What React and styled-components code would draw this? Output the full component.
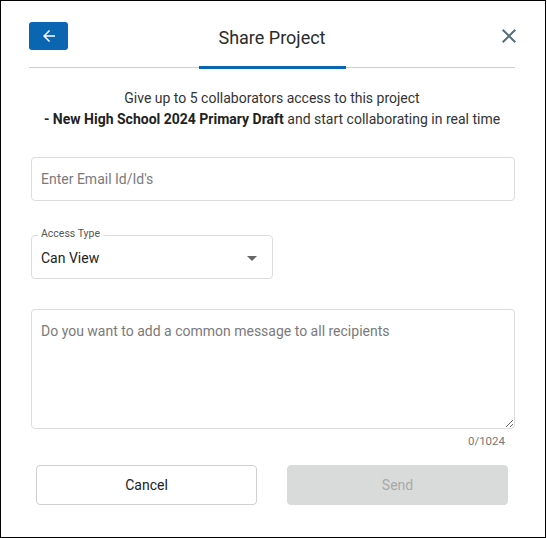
import React from 'react';
import styled, { createGlobalStyle } from 'styled-components';

const GlobalStyle = createGlobalStyle`
  body {
    margin: 0;
    background: #fff;
    font-family: Roboto, "Liberation Sans", sans-serif;
  }
`;

const Dialog = styled.div`
  box-sizing: border-box;
  width: 546px;
  height: 538px;
  border: 1px solid #000;
  padding: 21px 30px 0 28px;
  display: flex;
  flex-direction: column;
`;

const Header = styled.div`
  display: grid;
  grid-template-columns: 39px 1fr 39px;
  align-items: center;
  height: 28px;
`;

const BackButton = styled.button`
  width: 39px;
  height: 28px;
  border: none;
  border-radius: 3px;
  background: #0b66b1;
  display: flex;
  align-items: center;
  justify-content: center;
  padding: 0;
  cursor: pointer;
`;

const Title = styled.h2`
  margin: 0;
  padding-top: 2px;
  text-align: center;
  font-size: 18px;
  font-weight: 400;
  color: #2b2b2b;
`;

const CloseButton = styled.button`
  justify-self: end;
  border: none;
  background: none;
  padding: 0;
  margin-right: -6px;
  display: flex;
  cursor: pointer;
`;

const TabBar = styled.div`
  margin-top: 16px;
  height: 3px;
  display: flex;
  justify-content: center;
  background: linear-gradient(#cfcfcf, #cfcfcf) center / 100% 1px no-repeat;
`;

const Indicator = styled.div`
  width: 147px;
  height: 3px;
  background: #0b66b1;
`;

const Intro = styled.p`
  margin: 19px 0 0;
  text-align: center;
  font-size: 14px;
  line-height: 21px;
  color: #333;

  strong {
    font-weight: 700;
    color: #222;
  }
`;

const Form = styled.div`
  margin-left: 2px;
  display: flex;
  flex-direction: column;
`;

const TextInput = styled.input`
  box-sizing: border-box;
  width: 100%;
  height: 44px;
  margin-top: 27px;
  border: 1px solid #dcdcdc;
  border-radius: 4px;
  padding: 0 9px;
  font-family: inherit;
  font-size: 14px;
  color: #222;
  outline: none;

  &::placeholder {
    color: #7a7a7a;
  }
`;

const SelectWrap = styled.div`
  position: relative;
  width: 242px;
  margin-top: 34px;
`;

const FloatingLabel = styled.span`
  position: absolute;
  top: -8px;
  left: 7px;
  padding: 0 3px;
  background: #fff;
  font-size: 10.5px;
  line-height: 14px;
  color: #555;
`;

const SelectBox = styled.div`
  box-sizing: border-box;
  height: 44px;
  border: 1px solid #dcdcdc;
  border-radius: 4px;
  padding: 2px 15px 0 9px;
  display: flex;
  align-items: center;
  justify-content: space-between;
  font-size: 14px;
  color: #222;
`;

const Caret = styled.span`
  width: 0;
  height: 0;
  border-left: 5px solid transparent;
  border-right: 5px solid transparent;
  border-top: 5px solid #666;
`;

const MessageArea = styled.textarea`
  box-sizing: border-box;
  width: 100%;
  height: 120px;
  margin-top: 30px;
  border: 1px solid #dcdcdc;
  border-radius: 4px;
  padding: 11px 9px;
  font-family: inherit;
  font-size: 14px;
  line-height: 21px;
  resize: vertical;
  outline: none;
  display: block;

  &::placeholder {
    color: #7a7a7a;
  }
`;

const Counter = styled.div`
  margin-top: 5px;
  padding-right: 10px;
  text-align: right;
  font-size: 11.5px;
  line-height: 14px;
  color: #777;
`;

const Actions = styled.div`
  margin-top: 17px;
  display: flex;
  justify-content: center;
  gap: 30px;
`;

const ActionButton = styled.button`
  box-sizing: border-box;
  width: 221px;
  height: 40px;
  border-radius: 4px;
  font-family: inherit;
  font-size: 14px;
  font-weight: 400;
  border: 1px solid ${({ disabled }) => (disabled ? '#d9dbdb' : '#cfcfcf')};
  background: ${({ disabled }) => (disabled ? '#d9dbdb' : '#fff')};
  color: ${({ disabled }) => (disabled ? '#a9a9a9' : '#222')};
  cursor: ${({ disabled }) => (disabled ? 'default' : 'pointer')};
`;

const App = () => (
  <>
    <GlobalStyle />
    <Dialog>
      <Header>
        <BackButton aria-label="Back">
          <svg width="18" height="18" viewBox="0 0 24 24" fill="#fff">
            <path d="M20 11H7.83l5.59-5.59L12 4l-8 8 8 8 1.41-1.41L7.83 13H20v-2z" />
          </svg>
        </BackButton>
        <Title>Share Project</Title>
        <CloseButton aria-label="Close">
          <svg width="24" height="24" viewBox="0 0 24 24" fill="#56707c">
            <path d="M19 6.41L17.59 5 12 10.59 6.41 5 5 6.41 10.59 12 5 17.59 6.41 19 12 13.41 17.59 19 19 17.59 13.41 12z" />
          </svg>
        </CloseButton>
      </Header>
      <TabBar>
        <Indicator />
      </TabBar>
      <Intro>
        Give up to 5 collaborators access to this project
        <br />
        <strong>- New High School 2024 Primary Draft</strong> and start collaborating in real time
      </Intro>
      <Form>
        <TextInput placeholder="Enter Email Id/Id's" />
        <SelectWrap>
          <FloatingLabel>Access Type</FloatingLabel>
          <SelectBox>
            Can View
            <Caret />
          </SelectBox>
        </SelectWrap>
        <MessageArea placeholder="Do you want to add a common message to all recipients" />
        <Counter>0/1024</Counter>
      </Form>
      <Actions>
        <ActionButton>Cancel</ActionButton>
        <ActionButton disabled>Send</ActionButton>
      </Actions>
    </Dialog>
  </>
);

export default App;
